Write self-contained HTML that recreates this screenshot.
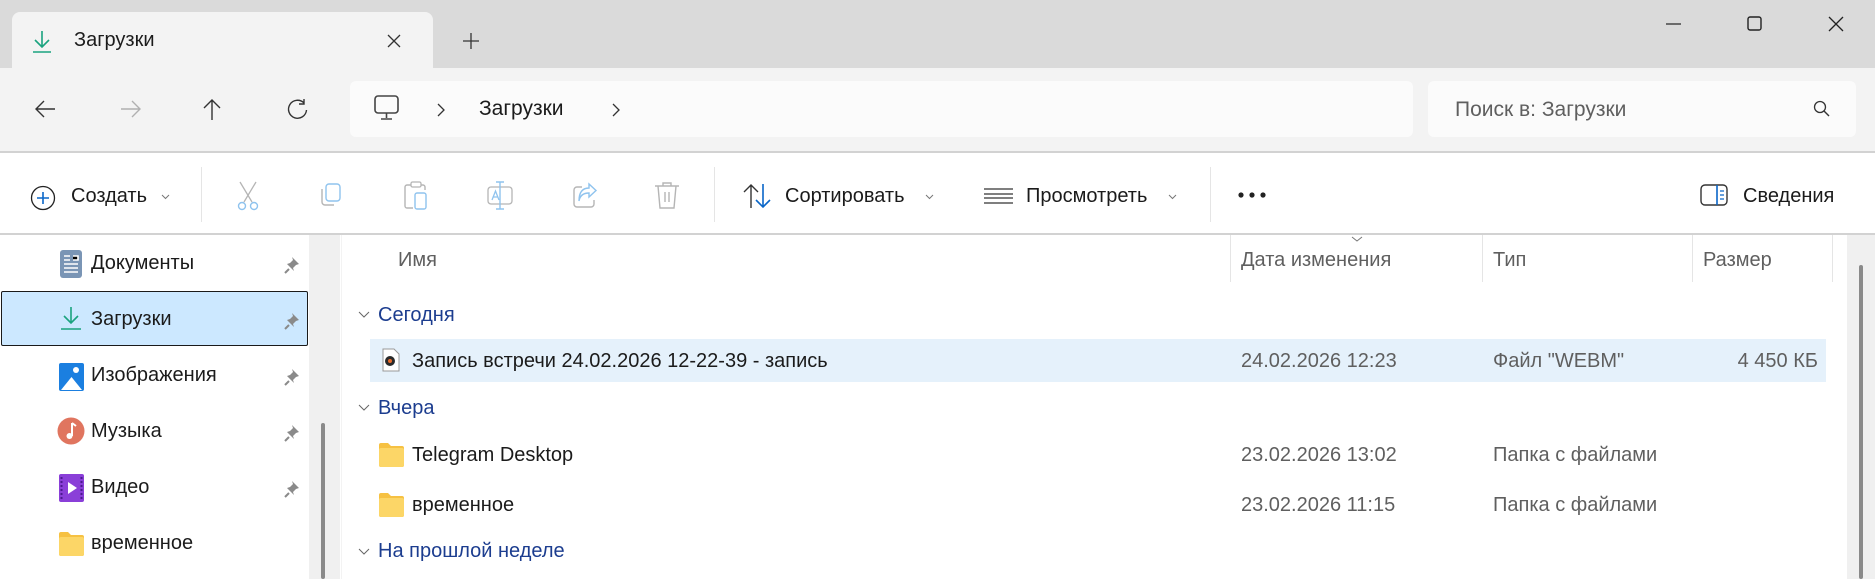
<!DOCTYPE html>
<html><head><meta charset="utf-8"><style>
*{margin:0;padding:0;box-sizing:border-box}
body{width:1875px;height:579px;overflow:hidden;background:#fff;font-family:"Liberation Sans","DejaVu Sans",sans-serif;font-size:20px;color:#1b1b1b;position:relative}
.a{position:absolute;white-space:nowrap}
.g{color:#5f5f5f}
.b{color:#1c3d8f}
svg{position:absolute;overflow:visible}
</style></head><body>
<div class="a" style="left:0;top:0;width:1875px;height:68px;background:#dadada"></div>
<div class="a" style="left:12px;top:12px;width:421px;height:58px;background:#f3f3f3;border-radius:8px 8px 0 0"></div>
<svg style="left:31px;top:30px" width="22" height="24"><path d="M11 1V17M4 10L11 17L18 10M2 22H20" stroke="#1aa37f" stroke-width="1.6" fill="none"/></svg>
<div class="a" style="left:74px;top:29px">Загрузки</div>
<svg style="left:387px;top:34px" width="14" height="14"><path d="M1 1L13 13M13 1L1 13" stroke="#333" stroke-width="1.3"/></svg>
<svg style="left:463px;top:33px" width="16" height="16"><path d="M8 0V16M0 8H16" stroke="#333" stroke-width="1.3"/></svg>
<svg style="left:1666px;top:23px" width="15" height="2"><path d="M0 1H15" stroke="#222" stroke-width="1.2"/></svg>
<svg style="left:1747px;top:16px" width="16" height="16"><rect x="1" y="1" width="13" height="13" rx="2" stroke="#222" stroke-width="1.4" fill="none"/></svg>
<svg style="left:1828px;top:16px" width="16" height="16"><path d="M1 1L15 15M15 1L1 15" stroke="#222" stroke-width="1.3"/></svg>
<div class="a" style="left:0;top:68px;width:1875px;height:84px;background:#f3f3f3"></div>
<svg style="left:34px;top:99px" width="22" height="20"><path d="M21 10H2M10 2L2 10L10 18" stroke="#333" stroke-width="1.4" fill="none"/></svg>
<svg style="left:120px;top:99px" width="22" height="20"><path d="M1 10H20M12 2L20 10L12 18" stroke="#b0b0b0" stroke-width="1.4" fill="none"/></svg>
<svg style="left:202px;top:98px" width="20" height="22"><path d="M10 22V2M2 10L10 2L18 10" stroke="#333" stroke-width="1.4" fill="none"/></svg>
<svg style="left:287px;top:99px" width="22" height="22"><path d="M17 4A9 9 0 1 0 19.5 11M17 0V5H12" stroke="#333" stroke-width="1.4" fill="none"/></svg>
<div class="a" style="left:350px;top:81px;width:1063px;height:56px;background:#fbfbfb;border-radius:6px"></div>
<svg style="left:374px;top:95px" width="26" height="26"><rect x="1" y="1" width="23" height="17" rx="3" stroke="#444" stroke-width="1.6" fill="none"/><path d="M12.5 18V23M7 24H18" stroke="#444" stroke-width="1.6"/></svg>
<svg style="left:437px;top:103px" width="8" height="14"><path d="M1 1L7 7L1 13" stroke="#333" stroke-width="1.3" fill="none"/></svg>
<div class="a" style="left:479px;top:97px;font-size:21px">Загрузки</div>
<svg style="left:612px;top:103px" width="8" height="14"><path d="M1 1L7 7L1 13" stroke="#333" stroke-width="1.3" fill="none"/></svg>
<div class="a" style="left:1428px;top:81px;width:428px;height:56px;background:#fbfbfb;border-radius:6px"></div>
<div class="a g" style="left:1455px;top:98px;font-size:21px">Поиск в: Загрузки</div>
<svg style="left:1813px;top:100px" width="18" height="18"><circle cx="7" cy="7" r="5.5" stroke="#333" stroke-width="1.3" fill="none"/><path d="M11 11L16 16" stroke="#333" stroke-width="1.4"/></svg>
<div class="a" style="left:0;top:151px;width:1875px;height:2px;background:#d2d2d2"></div>
<svg style="left:30px;top:185px" width="26" height="26"><circle cx="13" cy="13" r="11.5" stroke="#222" stroke-width="1.3" fill="none"/><path d="M13 7V19M7 13H19" stroke="#0a66c8" stroke-width="1.6"/></svg>
<div class="a" style="left:71px;top:185px">Создать</div>
<svg style="left:161px;top:194px" width="9" height="6"><path d="M1 1L4.5 4.5L8 1" stroke="#777" fill="none"/></svg>
<div class="a" style="left:201px;top:167px;width:1px;height:55px;background:#e5e5e5"></div>
<svg style="left:236px;top:181px" width="24" height="30"><path d="M4 1L16 21M20 1L8 21" stroke="#b5b5b5" stroke-width="1.3"/><circle cx="6" cy="25" r="3.5" stroke="#8fc3ee" stroke-width="1.4" fill="none"/><circle cx="18" cy="25" r="3.5" stroke="#8fc3ee" stroke-width="1.4" fill="none"/></svg>
<svg style="left:318px;top:183px" width="26" height="26"><rect x="8" y="1" width="14" height="17" rx="3" stroke="#8fc3ee" stroke-width="1.4" fill="none"/><path d="M4 6V19A3 3 0 0 0 7 22H16" stroke="#b5b5b5" stroke-width="1.4" fill="none"/></svg>
<svg style="left:403px;top:181px" width="26" height="30"><path d="M8 4H4A2 2 0 0 0 2 6V25A2 2 0 0 0 4 27H10M18 4H20A2 2 0 0 1 22 6V9" stroke="#b5b5b5" stroke-width="1.4" fill="none"/><rect x="8" y="1" width="10" height="5" rx="1.5" stroke="#b5b5b5" stroke-width="1.3" fill="none"/><rect x="12" y="12" width="11" height="16" rx="2" stroke="#8fc3ee" stroke-width="1.4" fill="none"/></svg>
<svg style="left:486px;top:181px" width="28" height="30"><rect x="2" y="6" width="24" height="17" rx="3" stroke="#b5b5b5" stroke-width="1.3" fill="none"/><path d="M14 1V28M10 1H18M10 28H18" stroke="#8fc3ee" stroke-width="1.4"/><path d="M6 19L9.5 10L13 19M7.5 16H11.5" stroke="#8fc3ee" stroke-width="1.3" fill="none"/></svg>
<svg style="left:572px;top:183px" width="26" height="26"><path d="M10 4H5A3 3 0 0 0 2 7V21A3 3 0 0 0 5 24H19A3 3 0 0 0 22 21V17" stroke="#b5b5b5" stroke-width="1.4" fill="none"/><path d="M7 18C8 12 12 10 17 10V14L24 7.5L17 1V5C10 5 7 10 7 18Z" stroke="#8fc3ee" stroke-width="1.4" fill="none"/></svg>
<svg style="left:654px;top:181px" width="26" height="30"><path d="M1 5H25M9 5V2H17V5M4 5L6 27H20L22 5M11 11V21M15 11V21" stroke="#b5b5b5" stroke-width="1.4" fill="none"/></svg>
<div class="a" style="left:714px;top:167px;width:1px;height:55px;background:#e5e5e5"></div>
<svg style="left:743px;top:183px" width="30" height="26"><path d="M8 25V2M1 9L8 2L15 9" stroke="#333" stroke-width="1.4" fill="none"/><path d="M20 1V24M13 17L20 24L27 17" stroke="#0a66c8" stroke-width="1.6" fill="none"/></svg>
<div class="a" style="left:785px;top:185px">Сортировать</div>
<svg style="left:925px;top:194px" width="9" height="6"><path d="M1 1L4.5 4.5L8 1" stroke="#777" fill="none"/></svg>
<svg style="left:984px;top:188px" width="29" height="16"><path d="M0 1H29M0 6H29M0 10H29M0 15H29" stroke="#333" stroke-width="1.3"/></svg>
<div class="a" style="left:1026px;top:185px">Просмотреть</div>
<svg style="left:1168px;top:194px" width="9" height="6"><path d="M1 1L4.5 4.5L8 1" stroke="#777" fill="none"/></svg>
<div class="a" style="left:1210px;top:167px;width:1px;height:55px;background:#e5e5e5"></div>
<svg style="left:1238px;top:192px" width="30" height="6"><circle cx="3" cy="3" r="2.6" fill="#222"/><circle cx="14" cy="3" r="2.6" fill="#222"/><circle cx="25" cy="3" r="2.6" fill="#222"/></svg>
<svg style="left:1700px;top:184px" width="29" height="23"><rect x="1" y="1" width="26" height="20" rx="4" stroke="#333" stroke-width="1.4" fill="none"/><path d="M17 1V21" stroke="#0a66c8" stroke-width="1.6"/><path d="M20 7H24M20 11H24M20 15H24" stroke="#0a66c8" stroke-width="1.3"/></svg>
<div class="a" style="left:1743px;top:185px">Сведения</div>
<div class="a" style="left:0;top:233px;width:1875px;height:2px;background:#d2d2d2"></div>
<div class="a" style="left:309px;top:235px;width:31px;height:344px;background:#f0f0f0"></div>
<div class="a" style="left:321px;top:423px;width:4px;height:156px;background:#8a8a8a;border-radius:2px"></div>
<div class="a" style="left:341px;top:235px;width:1px;height:344px;background:#f3f3f3"></div>
<div class="a" style="left:1px;top:291px;width:307px;height:55px;background:#cce8ff;border:1.5px solid #1a1a1a;border-radius:2px"></div>
<svg style="left:60px;top:250px" width="22" height="28"><rect x="0" y="0" width="22" height="28" rx="3" fill="#7a95b5"/><path d="M4 6H10M4 10H10M13 6H18V10H13M4 14H18M4 18H18M4 22H18" stroke="#fff" stroke-width="1.6"/></svg>
<div class="a" style="left:91px;top:252px">Документы</div>
<svg style="left:60px;top:306px" width="22" height="26"><path d="M11 1V17M4 10L11 17L18 10M1 23H21" stroke="#1aa37f" stroke-width="1.6" fill="none"/></svg>
<div class="a" style="left:91px;top:308px">Загрузки</div>
<svg style="left:59px;top:363px" width="25" height="28"><rect x="0" y="0" width="25" height="28" rx="2" fill="#1b7fe0"/><path d="M2 27L12.5 14L23 27Z" fill="#fff"/><circle cx="17" cy="7" r="3" fill="#fff"/></svg>
<div class="a" style="left:91px;top:364px">Изображения</div>
<svg style="left:57px;top:417px" width="28" height="28"><circle cx="14" cy="14" r="13.5" fill="#e0755f"/><path d="M15 6V19" stroke="#fff" stroke-width="2"/><circle cx="12.5" cy="19" r="3" fill="#fff"/><path d="M15 6L19 9" stroke="#fff" stroke-width="2"/></svg>
<div class="a" style="left:91px;top:420px">Музыка</div>
<svg style="left:59px;top:474px" width="25" height="28"><rect x="0" y="0" width="25" height="28" rx="2" fill="#8a3fd8"/><path d="M9 8V20L18 14Z" fill="#fff"/><path d="M2.5 3V25M22.5 3V25" stroke="#4c1a90" stroke-width="2" stroke-dasharray="2 2"/></svg>
<div class="a" style="left:91px;top:476px">Видео</div>
<svg style="left:59px;top:532px" width="25" height="24"><path d="M0 2A2 2 0 0 1 2 0H9L12 3H23A2 2 0 0 1 25 5V22A2 2 0 0 1 23 24H2A2 2 0 0 1 0 22Z" fill="#f6c142"/><rect x="0" y="5" width="25" height="19" rx="2" fill="#fcd667"/></svg>
<div class="a" style="left:91px;top:532px">временное</div>
<svg style="left:284px;top:254px" width="20" height="20"><path d="M8 3L15 10L12 11L9 14L10 17L3 10L6 9L9 6Z" fill="#8a8a8a"/><path d="M5 15L1 19" stroke="#8a8a8a" stroke-width="2"/></svg>
<svg style="left:284px;top:310px" width="20" height="20"><path d="M8 3L15 10L12 11L9 14L10 17L3 10L6 9L9 6Z" fill="#8a8a8a"/><path d="M5 15L1 19" stroke="#8a8a8a" stroke-width="2"/></svg>
<svg style="left:284px;top:366px" width="20" height="20"><path d="M8 3L15 10L12 11L9 14L10 17L3 10L6 9L9 6Z" fill="#8a8a8a"/><path d="M5 15L1 19" stroke="#8a8a8a" stroke-width="2"/></svg>
<svg style="left:284px;top:422px" width="20" height="20"><path d="M8 3L15 10L12 11L9 14L10 17L3 10L6 9L9 6Z" fill="#8a8a8a"/><path d="M5 15L1 19" stroke="#8a8a8a" stroke-width="2"/></svg>
<svg style="left:284px;top:478px" width="20" height="20"><path d="M8 3L15 10L12 11L9 14L10 17L3 10L6 9L9 6Z" fill="#8a8a8a"/><path d="M5 15L1 19" stroke="#8a8a8a" stroke-width="2"/></svg>
<div class="a g" style="left:398px;top:249px">Имя</div>
<svg style="left:1351px;top:236px" width="12" height="6"><path d="M1 1L6 5L11 1" stroke="#777" fill="none"/></svg>
<div class="a" style="left:1230px;top:235px;width:1px;height:47px;background:#e5e5e5"></div>
<div class="a g" style="left:1241px;top:249px">Дата изменения</div>
<div class="a" style="left:1482px;top:235px;width:1px;height:47px;background:#e5e5e5"></div>
<div class="a g" style="left:1493px;top:249px">Тип</div>
<div class="a" style="left:1692px;top:235px;width:1px;height:47px;background:#e5e5e5"></div>
<div class="a g" style="left:1703px;top:249px">Размер</div>
<div class="a" style="left:1832px;top:235px;width:1px;height:47px;background:#e5e5e5"></div>
<div class="a" style="left:1847px;top:235px;width:28px;height:344px;background:#f0f0f0"></div>
<div class="a" style="left:1859px;top:265px;width:4px;height:314px;background:#8a8a8a;border-radius:2px"></div>
<svg style="left:358px;top:311px" width="12" height="7"><path d="M1 1L6 6L11 1" stroke="#666" fill="none"/></svg>
<div class="a b" style="left:378px;top:304px">Сегодня</div>
<div class="a" style="left:370px;top:339px;width:1456px;height:43px;background:#e5f1fb"></div>
<svg style="left:382px;top:348px" width="18" height="24"><path d="M1 1H12L17 6V23H1Z" fill="#fff" stroke="#999"/><circle cx="8" cy="13" r="5" fill="#2a2a2a"/><circle cx="8" cy="13" r="2" fill="#e86a2a"/></svg>
<div class="a" style="left:412px;top:350px">Запись встречи 24.02.2026 12-22-39 - запись</div>
<div class="a g" style="left:1241px;top:350px">24.02.2026 12:23</div>
<div class="a g" style="left:1493px;top:350px">Файл "WEBM"</div>
<div class="a g" style="left:1700px;top:350px;width:118px;text-align:right">4 450 КБ</div>
<svg style="left:358px;top:404px" width="12" height="7"><path d="M1 1L6 6L11 1" stroke="#666" fill="none"/></svg>
<div class="a b" style="left:378px;top:397px">Вчера</div>
<svg style="left:379px;top:443px" width="25" height="24"><path d="M0 2A2 2 0 0 1 2 0H9L12 3H23A2 2 0 0 1 25 5V22A2 2 0 0 1 23 24H2A2 2 0 0 1 0 22Z" fill="#f6c142"/><rect x="0" y="5" width="25" height="19" rx="2" fill="#fcd667"/></svg>
<div class="a" style="left:412px;top:444px">Telegram Desktop</div>
<div class="a g" style="left:1241px;top:444px">23.02.2026 13:02</div>
<div class="a g" style="left:1493px;top:444px">Папка с файлами</div>
<svg style="left:379px;top:493px" width="25" height="24"><path d="M0 2A2 2 0 0 1 2 0H9L12 3H23A2 2 0 0 1 25 5V22A2 2 0 0 1 23 24H2A2 2 0 0 1 0 22Z" fill="#f6c142"/><rect x="0" y="5" width="25" height="19" rx="2" fill="#fcd667"/></svg>
<div class="a" style="left:412px;top:494px">временное</div>
<div class="a g" style="left:1241px;top:494px">23.02.2026 11:15</div>
<div class="a g" style="left:1493px;top:494px">Папка с файлами</div>
<svg style="left:358px;top:548px" width="12" height="7"><path d="M1 1L6 6L11 1" stroke="#666" fill="none"/></svg>
<div class="a b" style="left:378px;top:540px">На прошлой неделе</div>
</body></html>
